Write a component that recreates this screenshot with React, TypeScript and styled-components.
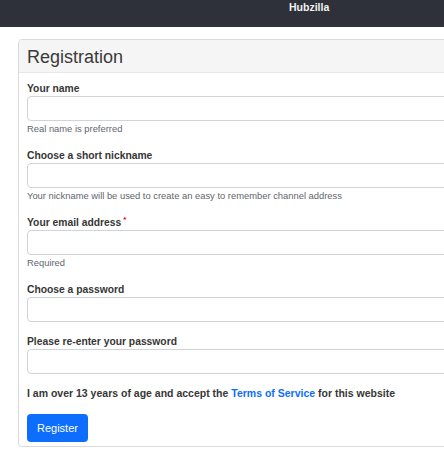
import styled, { createGlobalStyle } from "styled-components";

const GlobalStyle = createGlobalStyle`
  html, body {
    margin: 0;
    padding: 0;
    overflow: hidden;
    background: #ffffff;
    font-family: "Liberation Sans", Arial, sans-serif;
    color: #343a40;
  }
`;

const NavBar = styled.header`
  height: 27px;
  background: #2e3139;
  display: flex;
  align-items: flex-start;
  padding-left: 289px;
  box-sizing: border-box;
  .Brand {
    color: #f2f2f2;
    font-weight: bold;
    font-size: 10.5px;
    line-height: 14px;
  }
`;

const Main = styled.main`
  padding: 12px 0 0 18px;
`;

const Card = styled.section`
  width: 620px;
  border: 1px solid #dadada;
  border-radius: 4px;
  background: #fff;
  overflow: hidden;
`;

const CardHeader = styled.div`
  background: #f5f5f5;
  border-bottom: 1px solid #e6e6e6;
  padding: 6px 8px 4px;
  h2 {
    margin: 0;
    font-size: 18px;
    line-height: 22px;
    font-weight: normal;
    color: #3a3a3a;
  }
`;

const CardBody = styled.form`
  padding: 8px 8px 4px;
`;

const Field = styled.div`
  margin-bottom: 12px;
`;

const Label = styled.label`
  display: block;
  font-size: 10.3px;
  line-height: 15px;
  font-weight: bold;
  color: #363636;
  sup {
    color: #e60000;
    font-size: 8px;
    line-height: 0;
    margin-left: 2px;
  }
`;

const Input = styled.input`
  display: block;
  box-sizing: border-box;
  width: 100%;
  height: 25px;
  margin: 0;
  border: 1px solid #ced4da;
  border-radius: 4px;
  background: #fff;
  font-family: inherit;
  font-size: 11px;
  outline: none;
`;

const Help = styled.div`
  font-size: 9.4px;
  line-height: 15px;
  color: #5f666d;
`;

const Terms = styled.p`
  margin: 0 0 13px;
  font-size: 10.5px;
  line-height: 15px;
  font-weight: bold;
  color: #363636;
  a {
    color: #0d6efd;
    text-decoration: none;
  }
`;

const Button = styled.button`
  height: 28px;
  padding: 0 10px;
  border: none;
  border-radius: 4px;
  background: #0d6efd;
  color: #fff;
  font-family: inherit;
  font-size: 11px;
  cursor: pointer;
`;

interface IsField {
  label: string;
  help?: string;
  type?: string;
  required?: boolean;
}

const fields: IsField[] = [
  { label: "Your name", help: "Real name is preferred" },
  {
    label: "Choose a short nickname",
    help: "Your nickname will be used to create an easy to remember channel address",
  },
  { label: "Your email address", help: "Required", type: "email", required: true },
  { label: "Choose a password", type: "password" },
  { label: "Please re-enter your password", type: "password" },
];

export default function App() {
  return (
    <>
      <GlobalStyle />
      <NavBar>
        <span className="Brand">Hubzilla</span>
      </NavBar>
      <Main>
        <Card>
          <CardHeader>
            <h2>Registration</h2>
          </CardHeader>
          <CardBody onSubmit={(e) => e.preventDefault()}>
            {fields.map((f) => (
              <Field key={f.label}>
                <Label>
                  {f.label}
                  {f.required && <sup>*</sup>}
                </Label>
                <Input type={f.type || "text"} />
                {f.help && <Help>{f.help}</Help>}
              </Field>
            ))}
            <Terms>
              I am over 13 years of age and accept the <a href="#">Terms of Service</a> for this
              website
            </Terms>
            <Button type="submit">Register</Button>
          </CardBody>
        </Card>
      </Main>
    </>
  );
}
